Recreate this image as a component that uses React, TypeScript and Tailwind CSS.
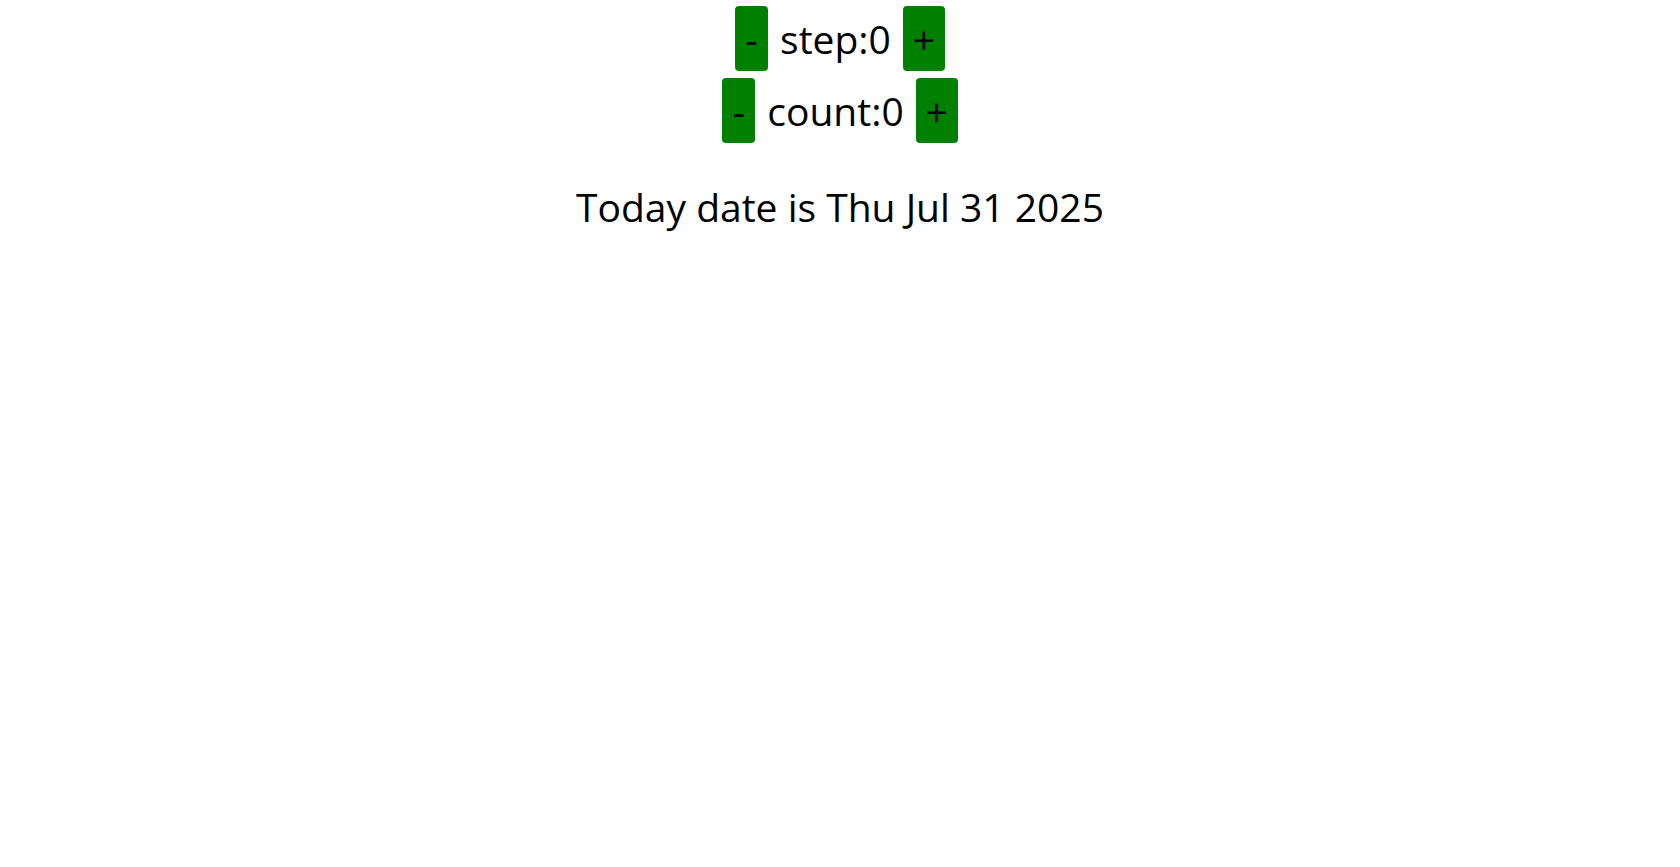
import { useState } from "react";

const Counter = ({ label, value, onDec, onInc }: { label: string; value: number; onDec: () => void; onInc: () => void }) => {
  return (
    <div className="flex items-center justify-center gap-3 h-[65px]">
      <button onClick={onDec} className="bg-[#008000] text-black rounded-[4px] h-[65px] w-[33px] text-[39px] leading-none flex items-center justify-center">
        -
      </button>
      <span className="text-[39px] leading-none">
        {label}:{value}
      </span>
      <button onClick={onInc} className="bg-[#008000] text-black rounded-[4px] h-[65px] w-[42px] text-[39px] leading-none flex items-center justify-center">
        +
      </button>
    </div>
  );
};

const App = () => {
  const [step, setStep] = useState(0);
  const [count, setCount] = useState(0);

  return (
    <div className="w-full min-h-screen bg-white text-black font-['Open_Sans',sans-serif] flex flex-col items-center pt-[6px]">
      <div className="flex flex-col items-center gap-[7px]">
        <Counter label="step" value={step} onDec={() => setStep(step - 1)} onInc={() => setStep(step + 1)} />
        <Counter label="count" value={count} onDec={() => setCount(count - 1)} onInc={() => setCount(count + 1)} />
      </div>
      <p className="text-[39px] leading-none mt-[44px]">Today date is Thu Jul 31 2025</p>
    </div>
  );
};

export default App;
